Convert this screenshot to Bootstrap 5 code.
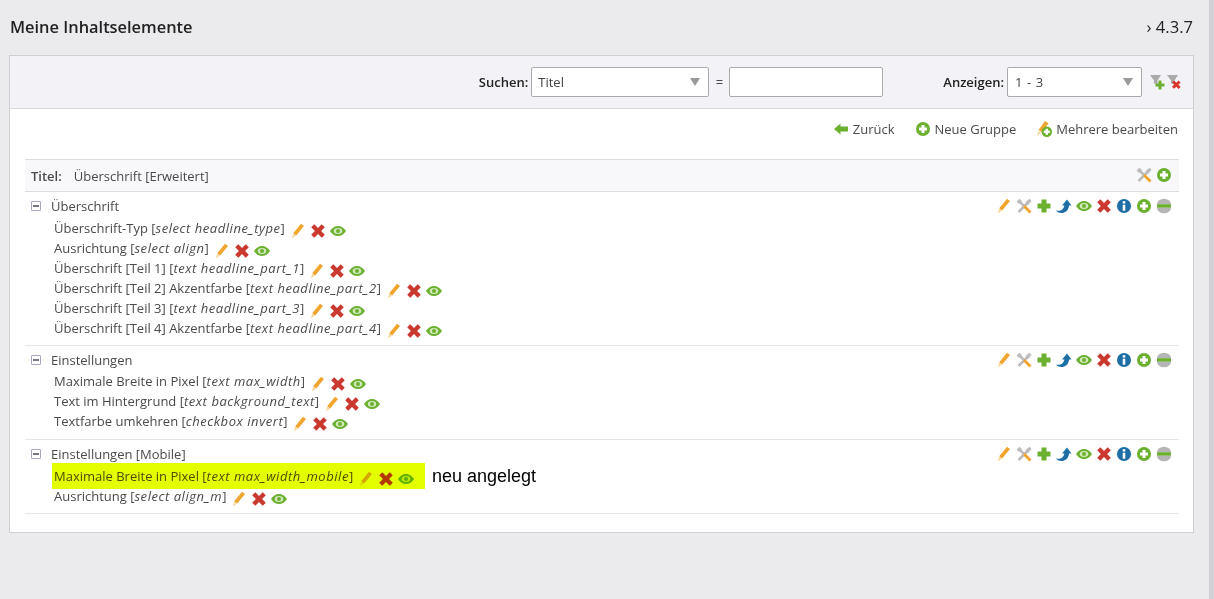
<!DOCTYPE html>
<html lang="de">
<head>
<meta charset="utf-8">
<title>Meine Inhaltselemente</title>
<link href="https://cdn.jsdelivr.net/npm/bootstrap@5.3.0/dist/css/bootstrap.min.css" rel="stylesheet">
<style>
html,body{height:100%;}
body{background:#ebebee;font-family:"Open Sans","Noto Sans",sans-serif;font-size:13px;line-height:20px;color:#4a4a4a;overflow:hidden;border-right:5px solid #d0d0d5;}
em{letter-spacing:.55px;}
.page-wrap{padding:0 15px 0 9px;height:599px;}
.page-head{height:55px;padding:0 1px 1px 1px;}
.page-title{font-size:16.4px;font-weight:600;color:#222;margin:0;line-height:22px;}
.page-version{font-size:16.6px;color:#222;line-height:22px;}
.panel-box{border:1px solid #cfcfd3;background:#fff;height:478px;}
.panel-top{height:53px;background:#f3f3f7;border-bottom:1px solid #d8d8dc;padding:0 10px 0 0;}
.fld-label{font-size:13px;font-weight:600;color:#222;margin:0 3px 0 0;flex:none;}
.fld-label-wide{margin-left:60px;}
.fld-select{flex:none;width:178px;height:30px;font-size:13px;line-height:20px;padding:3px 24px 3px 6px;border:1px solid #aaa;border-radius:2px;color:#444;font-family:inherit;background-size:10px 8px;background-position:right 8px center;background-image:url("data:image/svg+xml,%3Csvg xmlns='http://www.w3.org/2000/svg' viewBox='0 0 10 8'%3E%3Cpath fill='%23999' d='M0 0h10L5 8z'/%3E%3C/svg%3E");}
.fld-select-narrow{width:135px;letter-spacing:.6px;padding-left:7px;}
.fld-input{flex:none;width:154px;height:30px;font-size:13px;padding:3px 6px;border:1px solid #aaa;border-radius:2px;}
.eq-sign{flex:none;width:20px;text-align:right;padding-right:6px;}
.filter-icons{margin-left:8px;gap:1px;}
.panel-main{padding:0 14px 0 15px;}
.action-bar{height:50px;padding:10px 1px 0 0;gap:20px;}
.action-link{color:#4a4a4a;text-decoration:none;display:flex;align-items:center;gap:4px;}
.title-row{height:33px;background:#f8f8fb;border-top:1px solid #dcdce0;border-bottom:1px solid #dcdce0;padding:0 7px 0 6px;}
.title-label{font-size:13px;font-weight:600;margin-right:12px;}
.grp{border-bottom:1px solid #e6e6e8;padding:4px 7px 7px 6px;}
.grp-mid{padding-bottom:8px;}
.grp-head{height:20px;margin-bottom:1px;}
.grp-head-tall{margin-bottom:2px;}
.tree-box{width:10px;height:10px;border:1px solid #a8a8c0;border-radius:1px;margin-right:10px;position:relative;flex:none;}
.tree-box::after{content:"";position:absolute;left:1px;right:1px;top:3px;height:2px;background:#778;}
.grp-icons{gap:4px;margin-top:-1px;}
.ico{width:16px;height:16px;display:block;flex:none;}
.item-row{padding-left:23px;height:20px;display:flex;align-items:center;white-space:nowrap;}
.item-icons{display:inline-flex;align-items:center;gap:4px;margin:5px 0 0 5px;}
.hl-row{background:#e4ff00;margin:-3px 0 -3px -2px;padding:3px 0 3px 2px;display:flex;align-items:center;width:373px;height:26px;color:#4a4f00;flex:none;}
.hl-row .ico{mix-blend-mode:multiply;}
.note-text{font-family:"Liberation Sans",Arial,sans-serif;font-size:18px;color:#000;margin-left:7px;}
</style>
</head>
<body>
<svg width="0" height="0" class="d-none" aria-hidden="true">
<defs>
<symbol id="i-pencil" viewBox="0 0 16 16"><path fill="#f0a62e" d="M11 .8l3 2.200-7.800 9.500-3-2.200z"/><path fill="#f7d9a0" d="M3.200 10.300l3 2.200-4.200 3z"/></symbol>
<symbol id="i-tools" viewBox="0 0 16 16"><path stroke="#bcbcbc" stroke-width="2.600" d="M2.500 14L12 4.500" fill="none"/><path fill="#bcbcbc" d="M9.500 4l4-3.300 2 2-3.300 4.200z"/><path stroke="#bcbcbc" stroke-width="2.600" d="M3.500 3.500L9 9" fill="none"/><path fill="#bcbcbc" d="M.5 3.500L3.500.7 6 3 3 6z"/><path stroke="#f0a62e" stroke-width="2.800" d="M8 8l6.500 6.500" fill="none"/></symbol>
<symbol id="i-plus" viewBox="0 0 16 16"><path fill="#6bb02e" d="M5.500 1.500h5v4h4v5h-4v4h-5v-4h-4v-5h4z"/></symbol>
<symbol id="i-arrow" viewBox="0 0 16 16"><path fill="#1c6ea4" d="M0 12.500c3.500 1 7 0 8.500-5H6L11 1.500l4.500 6H13c-.5 5.500-4 7.500-7.500 7.500C3.500 15 1.500 14.300 0 12.500z"/></symbol>
<symbol id="i-eye" viewBox="0 0 16 16"><path fill="#6bb02e" d="M0 8c1.800-3 4.800-5 8-5s6.200 2 8 5c-1.800 3-4.800 5-8 5S1.800 11 0 8z"/><ellipse cx="8" cy="8" rx="4.300" ry="3" fill="#d3e8bd"/><circle cx="8" cy="8" r="2" fill="#6bb02e"/></symbol>
<symbol id="i-x" viewBox="0 0 16 16"><path fill="#c9392f" d="M4.300 1.200L8 4.900l3.700-3.700 3.100 3.100L11.100 8l3.700 3.700-3.100 3.100L8 11.100l-3.700 3.700-3.100-3.100L4.900 8 1.200 4.300z"/></symbol>
<symbol id="i-info" viewBox="0 0 16 16"><circle cx="8" cy="8" r="7" fill="#1c6ea4"/><rect x="6.700" y="3.200" width="2.600" height="2.300" fill="#fff"/><rect x="6.700" y="6.700" width="2.600" height="6" fill="#fff"/></symbol>
<symbol id="i-cplus" viewBox="0 0 16 16"><circle cx="8" cy="8" r="7" fill="#6bb02e"/><path fill="#fff" d="M6.500 4h3v2.500H12v3H9.500V12h-3V9.500H4v-3h2.500z"/></symbol>
<symbol id="i-cminus" viewBox="0 0 16 16"><path fill="#b5b5b5" d="M1 6.200a7 5.500 0 0 1 14 0z"/><rect x="1" y="6.200" width="14" height="3.600" fill="#6bb02e"/><path fill="#b5b5b5" d="M1 9.800a7 5.500 0 0 0 14 0z"/></symbol>
<symbol id="i-back" viewBox="0 0 16 16"><path fill="#6bb02e" d="M1 8l6.500-5.500V5.500H15v5H7.500v3z"/></symbol>
<symbol id="i-multi" viewBox="0 0 16 16"><path fill="#f0a62e" d="M9 0l3.500 2.300-6.500 9-3.500-2.300z"/><path fill="#f7d9a0" d="M2.300 10l3 2-4.300 3z"/><circle cx="10.800" cy="10.800" r="5.200" fill="#6bb02e"/><path fill="#fff" d="M9.600 7.800h2.400v1.800h1.800V12H12v1.800H9.600V12H7.800V9.600h1.800z"/></symbol>
<symbol id="i-fadd" viewBox="0 0 16 16"><path fill="#aaa" d="M0 1h11L7.500 6.500V11L4 9V6.500z"/><path fill="#6bb02e" d="M8.500 6.500h3v3h3v3h-3v3h-3v-3h-3v-3h3z"/></symbol>
<symbol id="i-fdel" viewBox="0 0 16 16"><path fill="#aaa" d="M0 1h11L7.500 6.500V11L4 9V6.500z"/><path fill="#d9362b" d="M7 6.500l2.300 2.300 2.300-2.300 2 2-2.300 2.300 2.300 2.300-2 2-2.300-2.300L7 14.800l-2-2 2.300-2.300L5 8.500z"/></symbol>
</defs>
</svg>
<div class="page-wrap">
  <div class="page-head d-flex justify-content-between align-items-center">
    <h1 class="page-title">Meine Inhaltselemente</h1>
    <div class="page-version">› 4.3.7</div>
  </div>
  <div class="panel-box">
    <div class="panel-top d-flex justify-content-end align-items-center">
      <label class="fld-label">Suchen:</label>
      <select class="form-select fld-select"><option>Titel</option></select>
      <span class="eq-sign">=</span>
      <input class="form-control fld-input" type="text">
      <label class="fld-label fld-label-wide">Anzeigen:</label>
      <select class="form-select fld-select fld-select-narrow"><option>1 - 3</option></select>
      <span class="d-flex filter-icons">
        <svg class="ico"><use href="#i-fadd"/></svg>
        <svg class="ico"><use href="#i-fdel"/></svg>
      </span>
    </div>
    <div class="panel-main">
      <div class="action-bar d-flex justify-content-end align-items-start">
        <a class="action-link" href="#"><svg class="ico"><use href="#i-back"/></svg>Zurück</a>
        <a class="action-link" href="#"><svg class="ico"><use href="#i-cplus"/></svg>Neue Gruppe</a>
        <a class="action-link" href="#"><svg class="ico"><use href="#i-multi"/></svg>Mehrere bearbeiten</a>
      </div>
      <div class="title-row d-flex justify-content-between align-items-center">
        <div><span class="title-label">Titel:</span>Überschrift [Erweitert]</div>
        <div class="d-flex grp-icons"><svg class="ico"><use href="#i-tools"/></svg><svg class="ico"><use href="#i-cplus"/></svg></div>
      </div>

      <div class="grp">
        <div class="grp-head grp-head-tall d-flex align-items-center">
          <span class="tree-box"></span><span class="flex-grow-1">Überschrift</span>
          <span class="d-flex grp-icons"><svg class="ico"><use href="#i-pencil"/></svg><svg class="ico"><use href="#i-tools"/></svg><svg class="ico"><use href="#i-plus"/></svg><svg class="ico"><use href="#i-arrow"/></svg><svg class="ico"><use href="#i-eye"/></svg><svg class="ico"><use href="#i-x"/></svg><svg class="ico"><use href="#i-info"/></svg><svg class="ico"><use href="#i-cplus"/></svg><svg class="ico"><use href="#i-cminus"/></svg></span>
        </div>
        <div class="item-row">Überschrift-Typ [<em>select headline_type</em>]<span class="item-icons"><svg class="ico"><use href="#i-pencil"/></svg><svg class="ico"><use href="#i-x"/></svg><svg class="ico"><use href="#i-eye"/></svg></span></div>
        <div class="item-row">Ausrichtung [<em>select align</em>]<span class="item-icons"><svg class="ico"><use href="#i-pencil"/></svg><svg class="ico"><use href="#i-x"/></svg><svg class="ico"><use href="#i-eye"/></svg></span></div>
        <div class="item-row">Überschrift [Teil 1] [<em>text headline_part_1</em>]<span class="item-icons"><svg class="ico"><use href="#i-pencil"/></svg><svg class="ico"><use href="#i-x"/></svg><svg class="ico"><use href="#i-eye"/></svg></span></div>
        <div class="item-row">Überschrift [Teil 2] Akzentfarbe [<em>text headline_part_2</em>]<span class="item-icons"><svg class="ico"><use href="#i-pencil"/></svg><svg class="ico"><use href="#i-x"/></svg><svg class="ico"><use href="#i-eye"/></svg></span></div>
        <div class="item-row">Überschrift [Teil 3] [<em>text headline_part_3</em>]<span class="item-icons"><svg class="ico"><use href="#i-pencil"/></svg><svg class="ico"><use href="#i-x"/></svg><svg class="ico"><use href="#i-eye"/></svg></span></div>
        <div class="item-row">Überschrift [Teil 4] Akzentfarbe [<em>text headline_part_4</em>]<span class="item-icons"><svg class="ico"><use href="#i-pencil"/></svg><svg class="ico"><use href="#i-x"/></svg><svg class="ico"><use href="#i-eye"/></svg></span></div>
      </div>

      <div class="grp grp-mid">
        <div class="grp-head d-flex align-items-center">
          <span class="tree-box"></span><span class="flex-grow-1">Einstellungen</span>
          <span class="d-flex grp-icons"><svg class="ico"><use href="#i-pencil"/></svg><svg class="ico"><use href="#i-tools"/></svg><svg class="ico"><use href="#i-plus"/></svg><svg class="ico"><use href="#i-arrow"/></svg><svg class="ico"><use href="#i-eye"/></svg><svg class="ico"><use href="#i-x"/></svg><svg class="ico"><use href="#i-info"/></svg><svg class="ico"><use href="#i-cplus"/></svg><svg class="ico"><use href="#i-cminus"/></svg></span>
        </div>
        <div class="item-row">Maximale Breite in Pixel [<em>text max_width</em>]<span class="item-icons"><svg class="ico"><use href="#i-pencil"/></svg><svg class="ico"><use href="#i-x"/></svg><svg class="ico"><use href="#i-eye"/></svg></span></div>
        <div class="item-row">Text im Hintergrund [<em>text background_text</em>]<span class="item-icons"><svg class="ico"><use href="#i-pencil"/></svg><svg class="ico"><use href="#i-x"/></svg><svg class="ico"><use href="#i-eye"/></svg></span></div>
        <div class="item-row">Textfarbe umkehren [<em>checkbox invert</em>]<span class="item-icons"><svg class="ico"><use href="#i-pencil"/></svg><svg class="ico"><use href="#i-x"/></svg><svg class="ico"><use href="#i-eye"/></svg></span></div>
      </div>

      <div class="grp">
        <div class="grp-head grp-head-tall d-flex align-items-center">
          <span class="tree-box"></span><span class="flex-grow-1">Einstellungen [Mobile]</span>
          <span class="d-flex grp-icons"><svg class="ico"><use href="#i-pencil"/></svg><svg class="ico"><use href="#i-tools"/></svg><svg class="ico"><use href="#i-plus"/></svg><svg class="ico"><use href="#i-arrow"/></svg><svg class="ico"><use href="#i-eye"/></svg><svg class="ico"><use href="#i-x"/></svg><svg class="ico"><use href="#i-info"/></svg><svg class="ico"><use href="#i-cplus"/></svg><svg class="ico"><use href="#i-cminus"/></svg></span>
        </div>
        <div class="item-row"><div class="hl-row">Maximale Breite in Pixel [<em>text max_width_mobile</em>]<span class="item-icons"><svg class="ico"><use href="#i-pencil"/></svg><svg class="ico"><use href="#i-x"/></svg><svg class="ico"><use href="#i-eye"/></svg></span></div><span class="note-text">neu angelegt</span></div>
        <div class="item-row">Ausrichtung [<em>select align_m</em>]<span class="item-icons"><svg class="ico"><use href="#i-pencil"/></svg><svg class="ico"><use href="#i-x"/></svg><svg class="ico"><use href="#i-eye"/></svg></span></div>
      </div>
    </div>
  </div>
</div>
<script src="https://cdn.jsdelivr.net/npm/bootstrap@5.3.0/dist/js/bootstrap.bundle.min.js"></script>
</body>
</html>
